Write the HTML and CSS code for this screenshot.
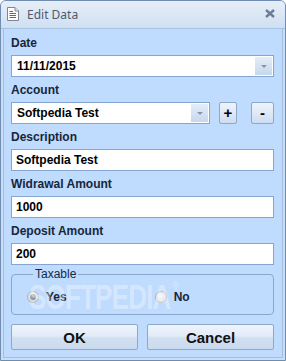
FILE: index.html
```html
<!DOCTYPE html>
<html lang="en">
<head>
    <meta charset="UTF-8">
    <title>Edit Data</title>
    <link rel="stylesheet" href="styles.css">
</head>
<body>
    <div class="window">
        <div class="titlebar">
            <svg class="title-icon" width="12" height="14" viewBox="0 0 12 14">
                <path d="M0.5 0.5 H8 L11.5 4 V13.5 H0.5 Z" fill="#fdfdfe" stroke="#7b8794"/>
                <path d="M8 0.5 V4 H11.5" fill="#e4e8ee" stroke="#7b8794"/>
                <path d="M2.5 4.5 H6 M2.5 6.5 H9 M2.5 8.5 H9 M2.5 10.5 H9" stroke="#2f6fd0" stroke-width="1"/>
            </svg>
            <span class="title">Edit Data</span>
            <svg class="close" width="10" height="9" viewBox="0 0 10 9">
                <path d="M1 1 L9 8 M9 1 L1 8" stroke="#6d7d95" stroke-width="2.4"/>
            </svg>
        </div>

        <div class="client">
            <div class="label">Date</div>
            <div class="input combo">
                <span class="value">11/11/2015</span>
                <span class="drop"><i></i></span>
            </div>

            <div class="label">Account</div>
            <div class="account-row">
                <div class="input combo account">
                    <span class="value">Softpedia Test</span>
                    <span class="drop"><i></i></span>
                </div>
                <button class="small-btn plus">+</button>
                <button class="small-btn minus">-</button>
            </div>

            <div class="label">Description</div>
            <div class="input"><span class="value">Softpedia Test</span></div>

            <div class="label">Widrawal Amount</div>
            <div class="input"><span class="value">1000</span></div>

            <div class="label">Deposit Amount</div>
            <div class="input"><span class="value">200</span></div>

            <fieldset class="group">
                <legend>Taxable</legend>
                <label class="radio yes"><span class="dot checked"></span>Yes</label>
                <label class="radio no"><span class="dot"></span>No</label>
            </fieldset>

            <div class="buttons">
                <button class="btn">OK</button>
                <button class="btn">Cancel</button>
            </div>
        </div>

        <div class="watermark">SOFTPEDIA<sup>®</sup></div>
    </div>
</body>
</html>
```

FILE: styles.css
```css
* {
    box-sizing: border-box;
}

body {
    margin: 0;
    font-family: "Liberation Sans", Arial, sans-serif;
}

.window {
    position: relative;
    width: 286px;
    height: 361px;
    border: 1px solid #6f8cb3;
    border-radius: 6px 6px 0 0;
    background: #c9ddf4;
    display: flex;
    flex-direction: column;
    overflow: hidden;
}

.titlebar {
    height: 28px;
    flex: none;
    display: flex;
    align-items: center;
    padding: 0 10px 0 6px;
    background: linear-gradient(#e6eef8 0%, #dce7f5 50%, #cfdff2 100%);
    border-bottom: 1px solid #a7c1e2;
}

.title-icon {
    margin-top: -1px;
}

.title {
    margin-left: 8px;
    font-family: "Noto Sans", "Open Sans", sans-serif;
    font-size: 12px;
    color: #4e5b6d;
    flex: 1;
}

.close {
    margin-top: -2px;
}

.client {
    flex: 1;
    margin: 0 2px 2px;
    border: 1px solid #a3bee0;
    border-top: none;
    background: #bfdbfe;
    padding: 7px 8px 0 7px;
}

.label {
    font-size: 12px;
    line-height: 14px;
    font-weight: bold;
    color: #17263b;
    margin-bottom: 5px;
}

.input {
    height: 22px;
    background: #fff;
    border: 1px solid #86a6d2;
    display: flex;
    align-items: center;
    margin-bottom: 6px;
    font-size: 12px;
    font-weight: bold;
    color: #000;
}

.value {
    flex: 1;
    padding-left: 4px;
}

.combo {
    padding: 1px;
}

.drop {
    width: 17px;
    height: 18px;
    background: linear-gradient(#e4edf8 0%, #d7e3f2 50%, #c6d7ec 100%);
    display: flex;
    align-items: center;
    justify-content: center;
}

.drop i {
    width: 0;
    height: 0;
    border-left: 3px solid transparent;
    border-right: 3px solid transparent;
    border-top: 3px solid #8196b4;
}

.account-row {
    display: flex;
    align-items: flex-start;
}

.account {
    width: 199px;
}

.small-btn {
    height: 22px;
    padding: 0;
    border: 1px solid #8ea8cc;
    border-radius: 2px;
    background: linear-gradient(#eef4fb 0%, #dfe9f6 50%, #cddcef 100%);
    font-family: "Liberation Sans", Arial, sans-serif;
    font-size: 15px;
    font-weight: bold;
    color: #000;
    line-height: 18px;
}

.plus {
    width: 18px;
    margin-left: 9px;
}

.minus {
    width: 23px;
    margin-left: 14px;
}

.group {
    margin: -4px 0 0;
    height: 48px;
    padding: 0 0 0 15px;
    border: 1px solid #8aa6cc;
    border-radius: 4px;
    display: flex;
    align-items: center;
}

.group legend {
    margin-left: 6px;
    padding: 0 2px;
    font-size: 12px;
    line-height: 14px;
    color: #15294a;
}

.radio {
    display: flex;
    align-items: center;
    font-size: 12px;
    font-weight: bold;
    color: #17263b;
    margin-top: -2px;
}

.radio.no {
    margin-left: 88px;
}

.dot {
    width: 12px;
    height: 12px;
    border-radius: 50%;
    border: 1px solid #a9b3bf;
    background: radial-gradient(circle at 50% 40%, #fbfbfb 0%, #d9dde2 70%, #c4c9d0 100%);
    margin-right: 7px;
    position: relative;
}

.dot.checked::after {
    content: "";
    position: absolute;
    left: 2px;
    top: 2px;
    width: 6px;
    height: 6px;
    border-radius: 50%;
    background: radial-gradient(circle at 40% 35%, #b6bcc4, #6f7884);
}

.buttons {
    display: flex;
    gap: 9px;
    margin-top: 9px;
}

.btn {
    width: 127px;
    height: 26px;
    padding: 0;
    border: 1px solid #8ea8cc;
    border-radius: 2px;
    background: linear-gradient(#eef4fb 0%, #e2ebf7 45%, #d1dff0 55%, #cadaee 100%);
    font-family: "Liberation Sans", Arial, sans-serif;
    font-size: 15px;
    font-weight: bold;
    color: #111;
}

.watermark {
    position: absolute;
    left: 28px;
    top: 276px;
    font-size: 35px;
    font-weight: bold;
    color: rgba(255, 255, 255, 0.35);
    transform: scaleX(0.74);
    transform-origin: left top;
    letter-spacing: -1px;
    pointer-events: none;
}

.watermark sup {
    font-size: 11px;
    vertical-align: top;
    position: relative;
    top: 2px;
    margin-left: 3px;
}
```
